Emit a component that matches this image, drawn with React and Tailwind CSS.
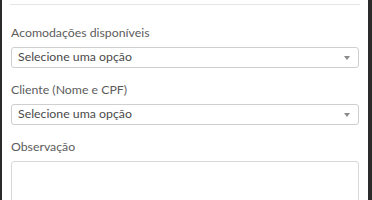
import React from "react";

function Arrow() {
  return (
    <svg width="6" height="4" viewBox="0 0 6 4" className="shrink-0">
      <path d="M0 0 L6 0 L3 4 Z" fill="#8a8a8a" />
    </svg>
  );
}

function SelectField({ label }) {
  return (
    <div className="flex flex-col">
      <label className="text-[12.3px] leading-[16px] text-[#5c5c5c]">{label}</label>
      <div className="mt-[6px] h-[21px] rounded-[3px] border border-[#cfcfcf] bg-white flex items-center pl-[6px] pr-[8px]">
        <span className="flex-1 text-[12.3px] text-[#4a4a4a]">Selecione uma opção</span>
        <Arrow />
      </div>
    </div>
  );
}

export default function App() {
  return (
    <div
      className="w-[372px] h-[200px] bg-[#2b2b2b] flex overflow-hidden"
      style={{ fontFamily: "Lato, 'Open Sans', sans-serif" }}
    >
      <div className="ml-[2px] w-[366px] h-full bg-white flex flex-col">
        <div className="mx-[8px] mt-[4px] border-t border-[#e6e6e6]" />
        <div className="px-[9px] pt-[20px] flex flex-col gap-[14px]">
          <SelectField label="Acomodações disponíveis" />
          <SelectField label="Cliente (Nome e CPF)" />
          <div className="flex flex-col">
            <label className="text-[12.3px] leading-[16px] text-[#5c5c5c]">Observação</label>
            <div className="mt-[6px] h-[60px] rounded-[3px] border border-[#d8d8d8] bg-white" />
          </div>
        </div>
      </div>
    </div>
  );
}
